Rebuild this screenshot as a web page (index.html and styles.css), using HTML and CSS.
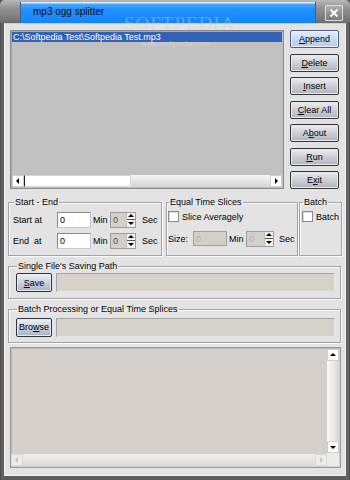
FILE: index.html
```html
<!DOCTYPE html>
<html lang="en">
<head>
  <meta charset="UTF-8" />
  <title>mp3 ogg splitter</title>
  <link rel="stylesheet" href="styles.css">
</head>
<body>

  <div class="window">

    <!-- Barre de titre -->
    <div class="titlebar">
      <div class="title-left"></div>
      <div class="title-tab">mp3 ogg splitter</div>
      <div class="title-right">
        <span class="close" aria-label="Close">
          <svg viewBox="0 0 10 10" width="10" height="10" aria-hidden="true">
            <path d="M1.5 1.5L8.5 8.5M8.5 1.5L1.5 8.5" stroke="#fff" stroke-width="2" fill="none"/>
          </svg>
        </span>
      </div>
    </div>

    <div class="client">

      <!-- Liste + boutons -->
      <div class="top">
        <div class="list">
          <div class="list-items">
            <div class="item sel">C:\Softpedia Test\Softpedia Test.mp3</div>
          </div>
          <div class="hscroll">
            <span class="sb-btn arrow-left"></span>
            <span class="sb-thumb"></span>
            <span class="sb-track"></span>
            <span class="sb-btn arrow-right"></span>
          </div>
        </div>
        <div class="actions">
          <button class="btn btn-active"><u>A</u>ppend</button>
          <button class="btn"><u>D</u>elete</button>
          <button class="btn"><u>I</u>nsert</button>
          <button class="btn"><u>C</u>lear All</button>
          <button class="btn">A<u>b</u>out</button>
          <button class="btn"><u>R</u>un</button>
          <button class="btn">E<u>x</u>it</button>
        </div>
      </div>

      <!-- Groupes -->
      <div class="groups">
        <fieldset class="grp grp-start">
          <legend>Start - End</legend>
          <div class="row">
            <span class="lbl">Start at</span>
            <span class="field">0</span>
            <span class="unit">Min</span>
            <span class="spin"><span class="spin-val">0</span><span class="spin-btns"><i class="up"></i><i class="dn"></i></span></span>
            <span class="unit sec">Sec</span>
          </div>
          <div class="row">
            <span class="lbl">End &nbsp;at</span>
            <span class="field">0</span>
            <span class="unit">Min</span>
            <span class="spin"><span class="spin-val">0</span><span class="spin-btns"><i class="up"></i><i class="dn"></i></span></span>
            <span class="unit sec">Sec</span>
          </div>
        </fieldset>

        <fieldset class="grp grp-equal">
          <legend>Equal Time Slices</legend>
          <label class="check"><span class="chk"></span>Slice Averagely</label>
          <div class="row">
            <span class="lbl size">Size:</span>
            <span class="field disabled">0</span>
            <span class="unit">Min</span>
            <span class="spin wide"><span class="spin-val dim">0</span><span class="spin-btns"><i class="up"></i><i class="dn"></i></span></span>
            <span class="unit">Sec</span>
          </div>
        </fieldset>

        <fieldset class="grp grp-batch">
          <legend>Batch</legend>
          <label class="check"><span class="chk"></span>Batch</label>
        </fieldset>
      </div>

      <fieldset class="grp grp-path">
        <legend>Single File's Saving Path</legend>
        <div class="path-row">
          <button class="btn btn-small"><u>S</u>ave</button>
          <span class="path-field"></span>
        </div>
      </fieldset>

      <fieldset class="grp grp-path second">
        <legend>Batch Processing or Equal Time Splices</legend>
        <div class="path-row">
          <button class="btn btn-small">Bro<u>w</u>se</button>
          <span class="path-field"></span>
        </div>
      </fieldset>

      <!-- Zone de log -->
      <div class="log">
        <div class="log-main">
          <div class="log-area"></div>
          <div class="vscroll">
            <span class="sb-btn arrow-up"></span>
            <span class="sb-vtrack"></span>
            <span class="sb-btn arrow-down"></span>
          </div>
        </div>
        <div class="log-bottom">
          <div class="hscroll faded">
            <span class="sb-btn arrow-left"></span>
            <span class="sb-track"></span>
            <span class="sb-btn arrow-right"></span>
          </div>
          <span class="corner"></span>
        </div>
      </div>
    </div>

    <div class="watermark">SOFTPEDIA</div>
    <div class="watermark-url">www.softpedia.com</div>
  </div>

</body>
</html>
```

FILE: styles.css
```css
/* Reset & base */
* { box-sizing: border-box; }

html, body {
  margin: 0; padding: 0;
  width: 350px;
  height: 480px;
  overflow: hidden;
}

body {
  font-family: 'Liberation Sans', Arial, sans-serif;
  font-size: 9px;
  color: #000;
  background: #5c5c5c;
}

/* Fenêtre */
.window {
  position: relative;
  width: 350px;
  height: 480px;
  background: linear-gradient(90deg, #4a4a4a, #636363 2px, #5c5c5c 4px, #5c5c5c 346px, #6a6a6a 348px, #4a4a4a);
  display: flex;
  flex-direction: column;
}

/* Barre de titre */
.titlebar {
  height: 23px;
  display: flex;
  background: linear-gradient(#b8b8b8, #939393 35%, #7a7a7a 80%, #6c6c6c);
  border-top-left-radius: 5px;
  border-top-right-radius: 5px;
}
.title-left {
  width: 20px;
}
.title-tab {
  flex: 1;
  margin-top: 2px;
  padding-left: 12px;
  line-height: 20px;
  font-size: 10px;
  color: #0a0a0a;
  background: linear-gradient(#d4eeff, #d4eeff 1px, #4aa8ff 2px, #1f8fff 40%, #1685fa);
  border-left: 1px solid #3d5f86;
  border-right: 1px solid #3d5f86;
}
.title-right {
  width: 34px;
  padding: 5px 0 0 9px;
}
.close {
  display: flex;
  align-items: center;
  justify-content: center;
  width: 18px;
  height: 16px;
  border: 1px solid #dcdcdc;
  border-radius: 1px;
  background: linear-gradient(#b2b2b2, #8c8c8c 60%, #7c7c7c);
}

/* Zone client */
.client {
  flex: 1;
  margin: 0 4px 4px;
  background: #e3e3e3;
  border: 1px solid #f2f2f2;
  border-top-color: #cfcfcf;
  display: flex;
  flex-direction: column;
}

.top {
  display: flex;
  gap: 6px;
  margin: 6px 6px 0 5px;
}

/* Liste des fichiers */
.list {
  width: 274px;
  height: 159px;
  padding: 1px;
  border: 1px solid #8c8c8c;
  box-shadow: inset 1px 1px 0 #a8a8a8;
  background: #c1c1c1;
  display: flex;
  flex-direction: column;
}
.list-items {
  flex: 1;
}
.item {
  height: 10px;
  line-height: 10px;
  padding-left: 1px;
  white-space: nowrap;
}
.item.sel {
  background: #3162b4;
  color: #fff;
}

/* Barres de défilement */
.hscroll {
  height: 12px;
  display: flex;
  background: linear-gradient(#f6f6f6, #e2e2e2 60%, #d6d6d6);
}
.sb-btn {
  position: relative;
  width: 12px;
  height: 12px;
  flex: none;
  background: #fff;
  border: 1px solid #cfcfcf;
}
.sb-btn::after {
  content: '';
  position: absolute;
  left: 50%;
  top: 50%;
  width: 0;
  height: 0;
  border: 3px solid transparent;
}
.arrow-left::after {
  border-right-color: #000;
  border-left-width: 0;
  margin: -3px 0 0 -2px;
}
.arrow-right::after {
  border-left-color: #000;
  border-right-width: 0;
  margin: -3px 0 0 -1px;
}
.arrow-up::after {
  border-bottom-color: #000;
  border-top-width: 0;
  margin: -2px 0 0 -3px;
}
.arrow-down::after {
  border-top-color: #000;
  border-bottom-width: 0;
  margin: -1px 0 0 -3px;
}
.sb-thumb {
  width: 107px;
  background: #fff;
  border: 1px solid #d8d8d8;
  border-left: 1px solid #202020;
}
.sb-track {
  flex: 1;
}

/* Boutons */
.actions {
  width: 49px;
  display: flex;
  flex-direction: column;
  gap: 5.5px;
}
.btn {
  height: 18px;
  padding: 0;
  font: inherit;
  color: #000;
  border: 1px solid #383838;
  border-radius: 2px;
  background: linear-gradient(#eceef2, #cfd2d8 45%, #b0b4bc);
  box-shadow: inset 0 0 0 1px #e6e8ec;
  text-align: center;
  cursor: pointer;
}
.btn-active {
  border-color: #4d5d80;
  background: linear-gradient(#e4eeff, #c6daf6 50%, #b6ccee);
  box-shadow: inset 0 0 0 1px #eef4ff;
}

/* Groupes */
.groups {
  display: flex;
  margin: 7.5px 3px 0 3px;
}
.grp {
  margin: 0;
  padding: 0;
  min-width: 0;
  border: 1px solid #a2a2a2;
  box-shadow: 1px 1px 0 #fbfbfb, inset 1px 1px 0 #fbfbfb;
}
.grp legend {
  margin-left: 1px;
  padding: 0 1px;
  line-height: 11px;
  font-size: 9px;
}
.grp-start {
  width: 154px;
  height: 59px;
  padding: 4px 0 0 4px;
}
.grp-equal {
  width: 132px;
  height: 59px;
  margin-left: 4px;
  padding: 3px 0 0 1px;
}
.grp-batch {
  width: 43px;
  height: 59px;
  margin-left: 1px;
  padding: 3px 0 0 2px;
}

.row {
  display: flex;
  align-items: center;
  height: 16px;
  margin-bottom: 5px;
}
.lbl {
  width: 44px;
}
.lbl.size {
  width: 25px;
}
.field {
  width: 34px;
  height: 16px;
  padding-left: 2px;
  line-height: 14px;
  background: #fff;
  border: 1px solid #8a8a8a;
  border-right-color: #c8c8c8;
  border-bottom-color: #c8c8c8;
}
.field.disabled {
  height: 15px;
  background: #d4d0c8;
  color: #b4b0a8;
  border-color: #a0a0a0;
}
.unit {
  width: 19px;
  padding-left: 2px;
}
.sec {
  padding-left: 6px;
  width: auto;
}

.spin {
  display: flex;
  width: 26px;
  height: 16px;
  margin-right: 0;
  border: 1px solid #9c9c9c;
}
.spin.wide {
  width: 28px;
  margin-right: 3px;
}
.spin-val {
  flex: 1;
  padding-left: 2px;
  line-height: 14px;
  background: #d4d0c8;
  color: #505050;
}
.spin-val.dim {
  color: #b4b0a8;
}
.spin-btns {
  width: 9px;
  display: flex;
  flex-direction: column;
  background: #f2f2f2;
  border-left: 1px solid #bdbdbd;
}
.spin-btns i {
  position: relative;
  flex: 1;
}
.spin-btns i::after {
  content: '';
  position: absolute;
  left: 1px;
  width: 0;
  height: 0;
  border: 3px solid transparent;
}
.spin-btns .up {
  border-bottom: 1px solid #555;
}
.spin-btns .up::after {
  top: 1px;
  border-bottom-color: #000;
  border-top-width: 0;
}
.spin-btns .dn::after {
  top: 2px;
  border-top-color: #000;
  border-bottom-width: 0;
}

/* Cases à cocher */
.check {
  display: flex;
  align-items: center;
  gap: 3px;
  height: 12px;
  margin-bottom: 8px;
}
.chk {
  width: 11px;
  height: 11px;
  background: #fff;
  border: 1px solid #8a8a8a;
  box-shadow: inset 1px 1px 0 #dadada;
}

/* Chemins */
.grp-path {
  height: 38px;
  margin: 5.5px 4px 0 3px;
  padding: 1px 5px 0 7px;
}
.grp-path.second {
  height: 39px;
  margin-top: 4.5px;
  padding-top: 3px;
}
.path-row {
  display: flex;
  gap: 4px;
}
.btn-small {
  width: 36px;
  height: 19px;
  border-color: #2e3440;
  background: linear-gradient(#eef1f8, #cdd4e2 45%, #aab2c2);
}
.path-field {
  flex: 1;
  height: 19px;
  background: #d6d2ca;
  border: 1px solid #a4a4a4;
  border-right-color: #e6e6e6;
  border-bottom-color: #e6e6e6;
}

/* Log */
.log {
  height: 121px;
  margin: 4px 4px 0 5px;
  border: 1px solid #9a9a9a;
  box-shadow: inset 1px 1px 0 #b8b8b8;
  background: #d5d1ca;
  display: flex;
  flex-direction: column;
}
.log-main {
  flex: 1;
  display: flex;
}
.log-area {
  flex: 1;
}
.vscroll {
  width: 12px;
  display: flex;
  flex-direction: column;
  margin: 1px 1px 0 0;
  background: linear-gradient(90deg, #fafafa, #e8e8e8 60%, #d4d4d4);
}
.sb-vtrack {
  flex: 1;
}
.log-bottom {
  height: 13px;
  display: flex;
  margin: 0 1px 1px 0;
}
.hscroll.faded {
  flex: 1;
  height: 12px;
  margin-top: 1px;
  background: linear-gradient(#ededed, #e4e4e4 50%, #dadada);
}
.hscroll.faded .sb-btn {
  background: #ececec;
  border-color: #dadada;
}
.hscroll.faded .arrow-left::after {
  border-right-color: #c4c4c4;
}
.hscroll.faded .arrow-right::after {
  border-left-color: #c4c4c4;
}
.corner {
  width: 12px;
  background: #ebebeb;
}

/* Filigrane */
.watermark {
  position: absolute;
  left: 124px;
  top: 13px;
  font-family: 'Liberation Serif', serif;
  font-size: 19px;
  letter-spacing: 1px;
  color: rgba(255, 255, 255, 0.35);
  text-shadow: 0 0 1px rgba(0, 0, 0, 0.12);
  pointer-events: none;
}
.watermark-url {
  position: absolute;
  left: 141px;
  top: 39px;
  font-size: 8px;
  color: rgba(255, 255, 255, 0.3);
  pointer-events: none;
}
```
